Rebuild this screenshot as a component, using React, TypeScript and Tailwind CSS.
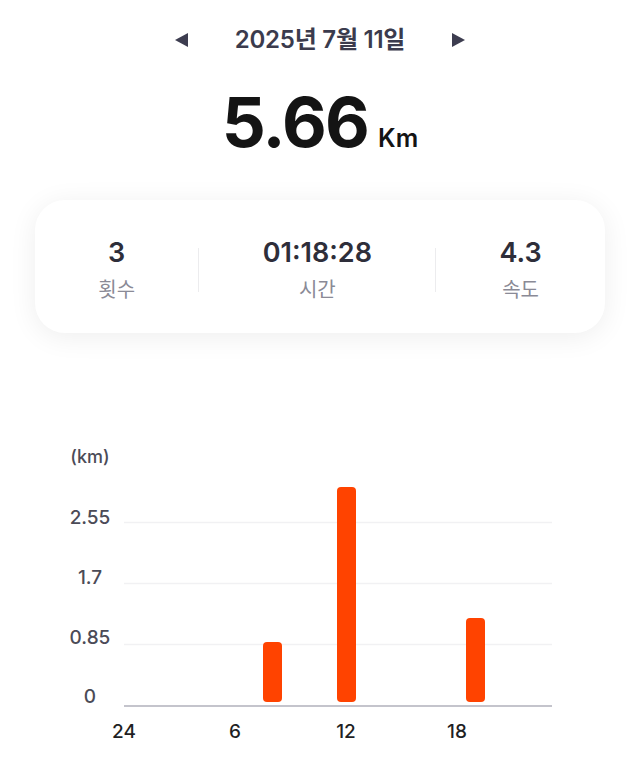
import React from 'react';

const FONT = "font-['Inter','Noto_Sans_CJK_KR',sans-serif]";

const stats = [
  { value: '3', label: '횟수' },
  { value: '01:18:28', label: '시간' },
  { value: '4.3', label: '속도' },
];

const bars = [
  { x: 263, top: 642 },
  { x: 337, top: 487 },
  { x: 466, top: 618 },
];

const yTicks = [
  { label: '2.55', line: 522.5, base: 524 },
  { label: '1.7', line: 583.5, base: 584 },
  { label: '0.85', line: 644.5, base: 644 },
];

const xTicks = [
  { label: '24', x: 124 },
  { label: '6', x: 235 },
  { label: '12', x: 346 },
  { label: '18', x: 457 },
];

function Triangle({ dir }: { dir: 'left' | 'right' }) {
  return (
    <svg width="15" height="16" viewBox="0 0 15 16">
      {dir === 'left' ? (
        <path d="M14 1 L14 15 L1 8 Z" fill="#3d3d50" />
      ) : (
        <path d="M1 1 L1 15 L14 8 Z" fill="#3d3d50" />
      )}
    </svg>
  );
}

export default function App() {
  return (
    <div className={`w-[640px] h-[776px] bg-white overflow-hidden ${FONT}`}>
      {/* date selector */}
      <div className="flex items-center justify-center gap-[46px] pt-[28px]">
        <Triangle dir="left" />
        <span className="text-[24px] leading-none font-semibold text-[#3b3b4d] tracking-[-0.01em]">
          2025년 7월 11일
        </span>
        <Triangle dir="right" />
      </div>

      {/* total distance */}
      <div className="flex items-baseline justify-center gap-[10px] mt-[36px]">
        <span className="text-[69px] leading-none font-bold text-[#141414] tracking-[-0.025em]">5.66</span>
        <span className="text-[25px] leading-none font-semibold text-[#141414]">Km</span>
      </div>

      {/* summary card */}
      <div className="mx-[35px] mt-[43px] h-[133px] pt-[6px] rounded-[30px] bg-white shadow-[0_4px_28px_rgba(0,0,0,0.07)] flex items-center justify-evenly">
        {stats.map((s, i) => (
          <React.Fragment key={s.label}>
            {i > 0 && <div className="w-px h-[44px] bg-[#ececee]" />}
            <div className="flex flex-col items-center">
              <span className="text-[27px] leading-none font-semibold text-[#2e2e3a]">{s.value}</span>
              <span className="mt-[14px] text-[20px] leading-none text-[#8a8a96]">{s.label}</span>
            </div>
          </React.Fragment>
        ))}
      </div>

      {/* hourly chart */}
      <svg width="640" height="376" viewBox="0 400 640 376" className="block mt-[67px]">
        <text x="90" y="463" textAnchor="middle" fontSize="18" fontWeight="500" fill="#4b4b57">
          (km)
        </text>
        {yTicks.map(t => (
          <g key={t.label}>
            <line x1="124" x2="552" y1={t.line} y2={t.line} stroke="#f1f1f3" strokeWidth="1.5" />
            <text x="90" y={t.base} textAnchor="middle" fontSize="19" fontWeight="500" fill="#4b4b57">
              {t.label}
            </text>
          </g>
        ))}
        <text x="90" y="703" textAnchor="middle" fontSize="19" fontWeight="500" fill="#4b4b57">
          0
        </text>
        <line x1="124" x2="552" y1="706" y2="706" stroke="#c4c4cc" strokeWidth="2" />
        {bars.map(b => (
          <rect key={b.x} x={b.x} y={b.top} width="19" height={702 - b.top} rx="4" fill="#ff4300" />
        ))}
        {xTicks.map(t => (
          <text key={t.label} x={t.x} y="738" textAnchor="middle" fontSize="19" fontWeight="500" fill="#1f1f24">
            {t.label}
          </text>
        ))}
      </svg>
    </div>
  );
}
